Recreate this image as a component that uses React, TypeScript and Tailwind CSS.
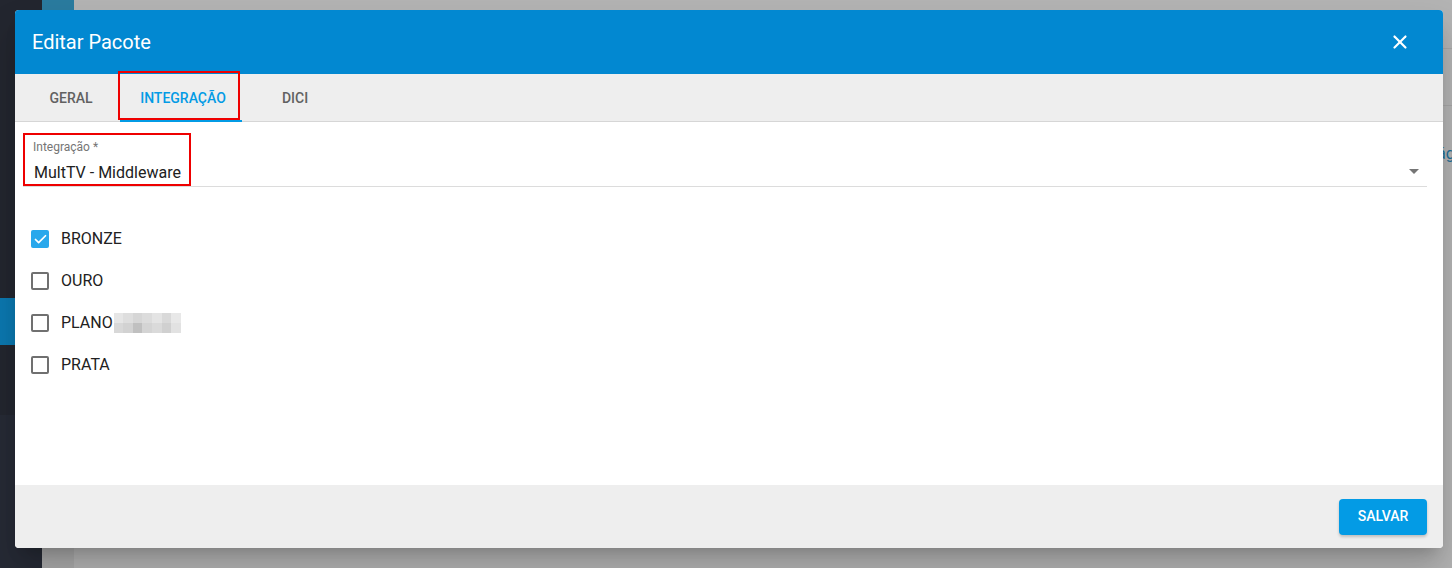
import { X, Check } from 'lucide-react'

const items = [
  { label: 'BRONZE', checked: true },
  { label: 'OURO', checked: false },
  { label: 'PLANO', checked: false, blur: true },
  { label: 'PRATA', checked: false },
]

const blurCells = [
  '#e6e6e6', '#dedede', '#d6d6d6', '#dcdcdc', '#e4e4e4', '#d9d9d9', '#e8e8e8',
  '#d8d8d8', '#d2d2d2', '#c0c0c0', '#d4d4d4', '#dadada', '#d0d0d0', '#e2e2e2',
]

export default function App() {
  return (
    <div
      className="relative w-[1452px] h-[568px] overflow-hidden flex"
      style={{ fontFamily: 'Roboto, "Liberation Sans", sans-serif' }}
    >
      {/* background page */}
      <div className="w-[42px] shrink-0 h-full bg-[#23262f] flex flex-col">
        <div className="h-[298px]" />
        <div className="h-[47px] bg-[#0b78b0]" />
        <div className="h-[70px]" />
        <div className="flex-1 bg-[#262a35]" />
      </div>
      <div className="w-[32px] shrink-0 h-full flex flex-col">
        <div className="h-[12px] bg-[#2a7b9f]" />
        <div className="flex-1 bg-[#a9a9a9]" />
      </div>
      <div className="flex-1 min-w-0 h-full bg-[#b3b3b3] flex flex-col">
        <div className="h-[48px]" />
        <div className="h-px bg-[#a6a6a6]" />
        <div className="h-[56px]" />
        <div className="h-px bg-[#a6a6a6]" />
        <div className="pt-[36px] pl-[1363px] text-[16px] text-[#1c6f98] whitespace-nowrap">ág</div>
      </div>

      {/* modal */}
      <div className="absolute left-[15px] top-[10px] w-[1428px] h-[538px] rounded-[4px] overflow-hidden bg-white flex flex-col shadow-[0_11px_15px_-7px_rgba(0,0,0,0.2),0_24px_38px_3px_rgba(0,0,0,0.14)]">
        <div className="h-[64px] bg-[#0288d1] flex items-center justify-between pl-[17px] pr-[32px]">
          <span className="text-white text-[20px]">Editar Pacote</span>
          <X size={22} strokeWidth={2.4} className="text-white" />
        </div>

        <div className="h-[48px] bg-[#eeeeee] border-b border-[#d6d6d6] flex">
          <div className="w-[112px] h-full flex items-center justify-center text-[14px] font-medium text-[#616161] pt-[1px]">
            GERAL
          </div>
          <div className="relative w-[112px] h-full flex items-center justify-center text-[14px] font-medium text-[#039be5] pt-[1px]">
            INTEGRAÇÃO
            <div className="absolute left-[-7px] right-[-3px] bottom-[-1px] h-[2px] bg-[#039be5]" />
            <div className="absolute left-[-9px] right-[-1px] top-[-3px] bottom-[1px] border-2 border-[#ee0000]" />
          </div>
          <div className="w-[112px] h-full flex items-center justify-center text-[14px] font-medium text-[#616161] pt-[1px]">
            DICI
          </div>
        </div>

        <div className="flex-1 bg-white px-[8px] pt-[11px]">
          <div className="relative border-b border-[#dcdcdc] h-[54px] mr-[8px]">
            <div className="absolute left-0 top-0 w-[168px] h-[53px] border-2 border-[#ee0000]" />
            <div className="pl-[10px] pt-[7px] text-[12px] text-[#757575] leading-[14px]">Integração *</div>
            <div className="pl-[11px] pt-[9px] text-[16px] text-[#212121] leading-[20px]">MultTV - Middleware</div>
            <div className="absolute right-[8px] top-[36px] w-0 h-0 border-l-[5px] border-r-[5px] border-t-[5px] border-l-transparent border-r-transparent border-t-[#757575]" />
          </div>

          <div className="pt-[43px] pl-[8px] flex flex-col gap-[24px]">
            {items.map((it) => (
              <div key={it.label} className="flex items-center h-[18px]">
                {it.checked ? (
                  <div className="w-[18px] h-[18px] rounded-[2px] bg-[#29a8ec] flex items-center justify-center">
                    <Check size={15} strokeWidth={2.8} className="text-white" />
                  </div>
                ) : (
                  <div className="w-[18px] h-[18px] rounded-[2px] border-2 border-[#707070]" />
                )}
                <span className="ml-[12px] text-[16px] text-[#212121]">{it.label}</span>
                {it.blur && (
                  <div className="ml-[1px] grid grid-cols-7 w-[67px] h-[20px]">
                    {blurCells.map((c, i) => (
                      <div key={i} style={{ background: c }} />
                    ))}
                  </div>
                )}
              </div>
            ))}
          </div>
        </div>

        <div className="h-[63px] bg-[#eeeeee] flex items-center justify-end pr-[16px]">
          <button className="w-[88px] h-[36px] rounded-[4px] bg-[#039be5] text-white text-[14px] font-medium shadow-[0_2px_3px_rgba(0,0,0,0.2)]">
            SALVAR
          </button>
        </div>
      </div>
    </div>
  )
}
